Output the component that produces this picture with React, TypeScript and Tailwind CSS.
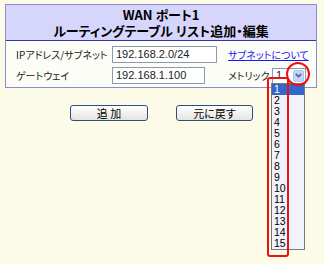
import { ChevronDown } from 'lucide-react';

const jp = "font-['Noto_Sans_CJK_JP',sans-serif] [font-feature-settings:'palt']";
const num = "font-['Liberation_Sans',Arial,sans-serif]";

const metrics = Array.from({ length: 15 }, (_, i) => i + 1);

export default function App() {
  return (
    <div className="relative w-[324px] h-[264px] overflow-hidden bg-[#fbfbe7] pt-[4px] pl-[5px]">
      {/* Panel */}
      <div className="w-[312px] border border-[#8c8cc8] bg-[#fdfdf8]">
        {/* Header */}
        <div className={`h-[36px] bg-[#d6d6fc] border-b border-[#3434a8] flex flex-col items-center justify-center text-[13px] leading-[16px] font-bold text-black ${jp}`}>
          <div className="whitespace-nowrap">WAN ポート1</div>
          <div className="whitespace-nowrap">ルーティングテーブル リスト追加・編集</div>
        </div>

        {/* Rows */}
        <div className={`pt-[5px] pb-[3px] text-[10px] text-[#222] whitespace-nowrap ${jp}`}>
          <div className="flex items-center h-[17px]">
            <span className="w-[106px] pl-[10px]">IPアドレス/サブネット</span>
            <div className={`w-[105px] h-[17px] border border-[#8a9bb0] bg-white pl-[3px] text-[11px] leading-[15px] ${num}`}>192.168.2.0/24</div>
            <a className="ml-[11px] text-[#1a1aee] underline">サブネットについて</a>
          </div>
          <div className="flex items-center h-[17px] mt-[4px]">
            <span className="w-[106px] pl-[10px]">ゲートウェイ</span>
            <div className={`w-[93px] h-[17px] border border-[#8a9bb0] bg-white pl-[3px] text-[11px] leading-[15px] ${num}`}>192.168.1.100</div>
            <span className="ml-[23px] w-[44px]">メトリック</span>
            <div className={`w-[34px] h-[16px] border border-[#8a9bb0] bg-white flex items-center justify-between pl-[3px] pr-[1px] text-[11px] ${num}`}>
              <span className="leading-none">1</span>
              <span className="w-[11px] h-[12px] rounded-[2px] bg-[#c3d3fa] border border-[#b0c4f0] flex items-center justify-center">
                <ChevronDown className="w-[9px] h-[9px] text-[#4d6185]" strokeWidth={4} />
              </span>
            </div>
          </div>
        </div>
      </div>

      {/* Buttons */}
      <div className={`flex mt-[17px] ml-[65px] gap-[28px] text-[11px] ${jp}`}>
        <button className="w-[78px] h-[16px] rounded-[3px] border border-[#2f4f7a] bg-gradient-to-b from-white to-[#e4e4e0] leading-[14px] text-black">追 加</button>
        <button className="w-[77px] h-[16px] rounded-[3px] border border-[#2f4f7a] bg-gradient-to-b from-white to-[#e4e4e0] leading-[14px] text-black">元に戻す</button>
      </div>

      {/* Dropdown list */}
      <div className={`absolute left-[271px] top-[83px] w-[34px] border border-[#7a7a7a] bg-[#f0f2fc] text-[10.5px] ${num}`}>
        {metrics.map((m) => (
          <div
            key={m}
            className={`h-[11px] leading-[11px] pl-[2px] ${m === 1 ? 'bg-[#3266c8] text-white' : 'text-black'}`}
          >
            {m}
          </div>
        ))}
      </div>

      {/* Annotations */}
      <div className="absolute left-[267px] top-[77px] w-[22px] h-[180px] border-2 border-[#ee1111] rounded-[3px]" />
      <div className="absolute left-[286px] top-[62px] w-[24px] h-[24px] border-2 border-[#ee1111] rounded-full" />
    </div>
  );
}
